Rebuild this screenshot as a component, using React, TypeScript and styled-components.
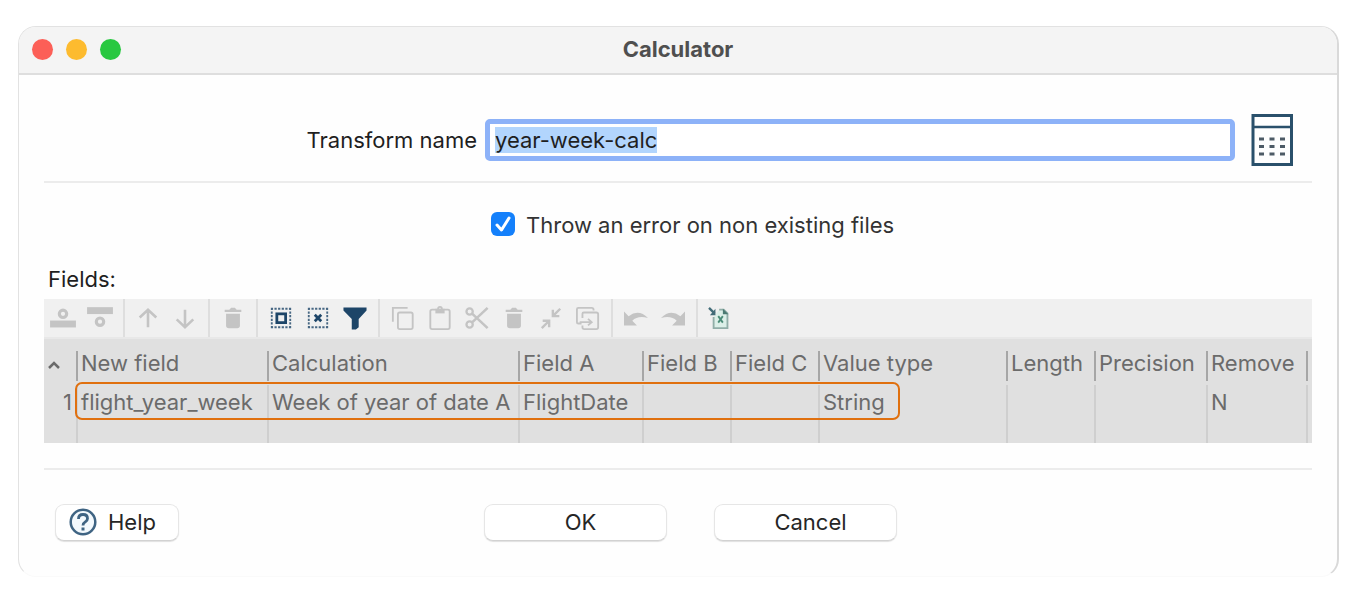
import React, { useEffect, useRef } from "react";
import styled, { createGlobalStyle } from "styled-components";

const GlobalStyle = createGlobalStyle`
  *, *::before, *::after { box-sizing: border-box; }
  body {
    margin: 0;
    background: #ffffff;
    color: #1f1f1f;
    font-family: Inter, "Liberation Sans", sans-serif;
    font-size: 22px;
    line-height: 27px;
  }
  button, input { font: inherit; color: inherit; }
`;

const Dialog = styled.main`
  margin: 26px 21px 26px 18px;
  min-width: 1100px;
  background: #fefefe;
  border: 1px solid #e2e2e2;
  border-right: 2px solid #d9d9d9;
  border-bottom-color: #fafafa;
  border-radius: 18px;
  overflow: hidden;
`;

const TitleBar = styled.header`
  display: grid;
  grid-template-columns: 1fr auto 1fr;
  align-items: center;
  height: 48px;
  padding: 0 13px 1px;
  background: #f4f4f4;
  border-bottom: 2px solid #dedede;
`;

const WindowControls = styled.div`
  display: flex;
  gap: 13px;
`;

const WindowControl = styled.button<{ $color: string }>`
  width: 21px;
  height: 21px;
  padding: 0;
  border: 0;
  border-radius: 50%;
  background: ${(p) => p.$color};
`;

const Title = styled.h1`
  margin: 0;
  font-size: 22px;
  line-height: 27px;
  font-weight: 700;
  color: #4f4f4f;
`;

const Content = styled.div`
  padding: 39px 25px 35px;
`;

const NameRow = styled.div`
  display: grid;
  grid-template-columns: 433px 1fr 42px;
  align-items: center;
  padding-right: 19px;
`;

const NameLabel = styled.label`
  text-align: right;
`;

const NameInput = styled.input`
  height: 42px;
  min-width: 0;
  margin: 0 16px 0 8px;
  padding: 0 5px;
  border: 5px solid #8db2f8;
  border-radius: 5px;
  background: #ffffff;
  outline: none;
  &::selection { background: #b2d5fd; color: #1f1f1f; }
`;

const Divider = styled.hr<{ $top: number }>`
  height: 2px;
  margin: ${(p) => p.$top}px 0 0;
  border: 0;
  background: #ececec;
`;

const CheckRow = styled.div`
  display: flex;
  align-items: flex-start;
  gap: 11px;
  margin-top: 29px;
  padding-left: 447px;
  color: #333333;
`;

const CheckBox = styled.span`
  display: grid;
  width: 24px;
  height: 24px;
  > * { grid-area: 1 / 1; }
  svg { pointer-events: none; }
`;

const CheckInput = styled.input`
  appearance: none;
  width: 24px;
  height: 24px;
  margin: 0;
  border: 1px solid #c4c4c4;
  border-radius: 6px;
  &:checked { border: 0; background: #1480fb; }
  &:not(:checked) + svg { visibility: hidden; }
`;

const FieldsTitle = styled.h2`
  margin: 27px 0 6px;
  padding-left: 4px;
  font-size: 22px;
  line-height: 27px;
  font-weight: 400;
`;

const Toolbar = styled.div`
  display: flex;
  height: 38px;
  background: #f0f0f0;
`;

const ToolGroup = styled.div`
  display: flex;
  padding: 0 5px 0 4px;
  border-right: 2px solid #dedede;
  &:first-child { padding-left: 0; }
  &:last-child { border-right: 0; }
`;

const ToolButton = styled.button<{ $active?: boolean }>`
  display: flex;
  align-items: center;
  justify-content: center;
  width: 37px;
  padding: 0;
  border: 0;
  background: transparent;
  color: ${(p) => (p.$active ? "#1d4568" : "#c4c4c4")};
`;

const TableWrap = styled.div`
  position: relative;
  height: 106px;
  padding-top: 3px;
  border-top: 2px solid #e8e8e8;
  background: #e0e0e0;
`;

const Table = styled.table`
  width: 100%;
  table-layout: fixed;
  border-collapse: separate;
  border-spacing: 0;
  color: #6b6b6b;
`;

const HeadCell = styled.th`
  height: 43px;
  padding: 9px 0 4px;
  font-weight: 400;
  text-align: left;
  white-space: nowrap;
`;

const HeadLabel = styled.span`
  display: block;
  height: 30px;
  padding: 0 0 0 3px;
  line-height: 24px;
  border-left: 2px solid #a6a6a6;
`;

const SortHead = styled.th`
  height: 43px;
  padding: 2px 0 0 3px;
  text-align: left;
  line-height: 0;
`;

const Cell = styled.td<{ $height: number }>`
  height: ${(p) => p.$height}px;
  padding: 0 0 0 3px;
  border-left: 2px solid #cfcfcf;
  white-space: nowrap;
`;

const NumberCell = styled.td`
  padding: 0 4px 0 0;
  text-align: right;
`;

const Highlight = styled.div`
  position: absolute;
  top: 43px;
  left: 31px;
  width: 825px;
  height: 38px;
  border: 2px solid #e0700f;
  border-radius: 7px;
  pointer-events: none;
`;

const Footer = styled.footer`
  display: grid;
  grid-template-columns: 429px auto 1fr;
  margin-top: 34px;
  padding-left: 11px;
`;

const Choices = styled.div`
  display: flex;
  gap: 47px;
`;

const PushButton = styled.button`
  display: flex;
  align-items: center;
  justify-content: center;
  width: 183px;
  height: 37px;
  padding: 0 0 1px 10px;
  border: 1px solid #e6e6e6;
  border-bottom-color: #d2d2d2;
  border-radius: 9px;
  background: #ffffff;
  box-shadow: 0 1px 1px rgba(0, 0, 0, 0.12);
  color: #262626;
`;

const HelpButton = styled(PushButton)`
  justify-content: flex-start;
  gap: 11px;
  width: 124px;
  padding-left: 13px;
`;

type IconProps = { children: React.ReactNode };

const Icon = ({ children }: IconProps) => (
  <svg width="24" height="24" viewBox="0 0 26 26" fill="none" stroke="currentColor" strokeWidth="2" overflow="visible" aria-hidden="true">
    {children}
  </svg>
);

const trash = (
  <g fill="currentColor" stroke="none">
    <path d="M4 4h5l2-2h4l2 2h5v2.500H4z" />
    <path d="M5.500 8.500h15V21q0 3-3 3h-9q-3 0-3-3z" />
  </g>
);

const dottedFrame = (
  <path d="M2 3h22M2 23h22M3 2v22M23 2v22" strokeDasharray="2.400 1.520" strokeWidth="2" strokeOpacity="0.8" />
);

const toolGroups: { name: string; active?: boolean; art: React.ReactNode }[][] = [
  [
    {
      name: "Insert row before",
      art: (
        <>
          <circle cx="13" cy="8.500" r="4" strokeWidth="3.400" />
          <path d="M-1 19.500h28" strokeWidth="7.500" />
        </>
      ),
    },
    {
      name: "Insert row after",
      art: (
        <>
          <path d="M-1 5h28" strokeWidth="7.500" />
          <circle cx="13" cy="17" r="4" strokeWidth="3.400" />
        </>
      ),
    },
  ],
  [
    { name: "Move up", art: <path d="M13 23V4M4 12.500L13 4l9 8.500" strokeWidth="2.800" /> },
    { name: "Move down", art: <path d="M13 4v19M4 14.500L13 23l9-8.500" strokeWidth="2.800" /> },
  ],
  [{ name: "Delete row", art: trash }],
  [
    {
      name: "Select all",
      active: true,
      art: (
        <>
          {dottedFrame}
          <rect x="8.500" y="8.500" width="9.500" height="9.500" strokeWidth="3" />
        </>
      ),
    },
    {
      name: "Clear selection",
      active: true,
      art: (
        <>
          {dottedFrame}
          <path d="M9.500 9.500l7 7M16.500 9.500l-7 7" strokeWidth="3" />
        </>
      ),
    },
    {
      name: "Filter",
      active: true,
      art: <path d="M.5 1.500h25V5L17 14v9l-3 2.500H9.500V14L.5 5z" fill="currentColor" stroke="none" />,
    },
  ],
  [
    {
      name: "Copy",
      art: (
        <>
          <path d="M2 17V2h16" />
          <rect x="7.500" y="7" width="16" height="18" rx="2" />
        </>
      ),
    },
    {
      name: "Paste",
      art: (
        <>
          <rect x="2.500" y="4" width="21" height="21" rx="2" />
          <path d="M8 3h10v5H8z" fill="currentColor" stroke="none" />
          <circle cx="13" cy="3" r="2" />
        </>
      ),
    },
    {
      name: "Cut",
      art: (
        <>
          <circle cx="5" cy="6" r="3.400" strokeWidth="2.500" />
          <circle cx="5" cy="20" r="3.400" strokeWidth="2.500" />
          <path d="M8 8.500L24.500 24M8 17.500L24.500 2" strokeWidth="2.800" />
        </>
      ),
    },
    { name: "Delete selected", art: trash },
    {
      name: "Keep selected",
      art: (
        <path d="M23 3l-7.500 7.500M15 4v7h7M3 24l7.500-7.500M4 16h7v7" strokeWidth="2.600" />
      ),
    },
    {
      name: "Copy to all rows",
      art: (
        <>
          <path d="M6 19H2.500q-1.500 0-1.500-1.500V3.500Q1 2 2.500 2H17q2 0 2 2v1" />
          <path d="M7 13V8.500Q7 7 8.500 7H22q2 0 2 2v14q0 2-2 2H9q-2 0-2-2v-2M4 17.500h12M13 14l4 3.500-4 3.500" />
        </>
      ),
    },
  ],
  [
    {
      name: "Undo",
      art: <path d="M0 6v15h14l-5-5q6-6 17-3Q16 3 5 11z" fill="currentColor" stroke="none" />,
    },
    {
      name: "Redo",
      art: <path d="M26 6v15H12l5-5q-6-6-17-3Q10 3 21 11z" fill="currentColor" stroke="none" />,
    },
  ],
  [
    {
      name: "Export to spreadsheet",
      active: true,
      art: (
        <>
          <path d="M5 12v12h15V8l-4-4h-5" fill="#dcefe8" stroke="#91aea8" />
          <path d="M15 3l6 6h-6z" fill="#4b7a72" stroke="none" />
          <path d="M10 11l5 7M15 11l-5 7" stroke="#4b8c78" />
          <path d="M0 2l6 6" stroke="#426c78" strokeWidth="2.500" />
          <path d="M7 3v7H1z" fill="#426c78" stroke="none" />
        </>
      ),
    },
  ],
];

const columns = [
  { label: "New field", value: "flight_year_week", width: 191 },
  { label: "Calculation", value: "Week of year of date A", width: 251 },
  { label: "Field A", value: "FlightDate", width: 124 },
  { label: "Field B", value: "", width: 88 },
  { label: "Field C", value: "", width: 88 },
  { label: "Value type", value: "String", width: 188 },
  { label: "Length", value: "", width: 88 },
  { label: "Precision", value: "", width: 112 },
  { label: "Remove", value: "N", width: 100 },
  { label: "", value: "", width: 0 },
];

const CalculatorIcon = () => (
  <svg width="42" height="52" viewBox="0 0 42 52" fill="none" stroke="#2a506b" aria-hidden="true">
    <rect x="2" y="1.500" width="38.500" height="49" strokeWidth="3" />
    <path d="M2 13h38" strokeWidth="2.500" />
    {[25, 32.5, 40].map((y) => (
      <path key={y} d={`M8 ${y}h5M18.500 ${y}h5M29 ${y}h5`} stroke="#4d5b66" strokeWidth="3" />
    ))}
  </svg>
);

const HelpIcon = () => (
  <svg width="28" height="28" viewBox="0 0 28 28" fill="none" stroke="#3f6483" aria-hidden="true">
    <circle cx="14" cy="14" r="12.300" strokeWidth="2.500" fill="#f3f9fd" />
    <path d="M9.500 11q0-4.500 4.500-4.500t4.500 4q0 2-2.200 3.400Q14 15.300 14 17.500" strokeWidth="2.800" />
    <path d="M14 19.500v3" strokeWidth="3" />
  </svg>
);

export default function App() {
  const nameRef = useRef<HTMLInputElement>(null);

  useEffect(() => {
    nameRef.current?.focus();
    nameRef.current?.select();
  }, []);

  return (
    <>
      <GlobalStyle />
      <Dialog>
        <TitleBar>
          <WindowControls>
            <WindowControl $color="#fc5f57" aria-label="Close" />
            <WindowControl $color="#fdbb2f" aria-label="Minimize" />
            <WindowControl $color="#28c840" aria-label="Zoom" />
          </WindowControls>
          <Title>Calculator</Title>
        </TitleBar>
        <Content>
          <NameRow>
            <NameLabel htmlFor="transform-name">Transform name</NameLabel>
            <NameInput ref={nameRef} id="transform-name" type="text" defaultValue="year-week-calc" spellCheck={false} />
            <CalculatorIcon />
          </NameRow>
          <Divider $top={15} />
          <CheckRow>
            <CheckBox>
              <CheckInput id="throw-error" type="checkbox" defaultChecked />
              <svg width="24" height="24" viewBox="0 0 24 24" fill="none" stroke="#ffffff" strokeWidth="3" strokeLinecap="round" strokeLinejoin="round" aria-hidden="true">
                <path d="M6 13l4.500 5L18 6" />
              </svg>
            </CheckBox>
            <label htmlFor="throw-error">Throw an error on non existing files</label>
          </CheckRow>
          <FieldsTitle>Fields:</FieldsTitle>
          <Toolbar role="toolbar" aria-label="Fields">
            {toolGroups.map((group) => (
              <ToolGroup key={group[0].name}>
                {group.map((tool) => (
                  <ToolButton key={tool.name} $active={tool.active} disabled={!tool.active} aria-label={tool.name}>
                    <Icon>{tool.art}</Icon>
                  </ToolButton>
                ))}
              </ToolGroup>
            ))}
          </Toolbar>
          <TableWrap>
            <Table>
              <colgroup>
                <col width={32} />
                {columns.map((c) => (
                  <col key={c.label} width={c.width || undefined} />
                ))}
              </colgroup>
              <thead>
                <tr>
                  <SortHead aria-label="Row number">
                    <svg width="14" height="10" viewBox="0 0 14 10" fill="none" stroke="#6b6b6b" strokeWidth="2.500" aria-hidden="true">
                      <path d="M2 8l5-5 5 5" />
                    </svg>
                  </SortHead>
                  {columns.map((c) => (
                    <HeadCell key={c.label}>
                      <HeadLabel>{c.label}</HeadLabel>
                    </HeadCell>
                  ))}
                </tr>
              </thead>
              <tbody>
                <tr>
                  <NumberCell>1</NumberCell>
                  {columns.map((c) => (
                    <Cell key={c.label} $height={34}>{c.value}</Cell>
                  ))}
                </tr>
                <tr>
                  <NumberCell />
                  {columns.map((c) => (
                    <Cell key={c.label} $height={24} />
                  ))}
                </tr>
              </tbody>
            </Table>
            <Highlight />
          </TableWrap>
          <Divider $top={25} />
          <Footer>
            <div>
              <HelpButton>
                <HelpIcon />
                Help
              </HelpButton>
            </div>
            <Choices>
              <PushButton>OK</PushButton>
              <PushButton>Cancel</PushButton>
            </Choices>
          </Footer>
        </Content>
      </Dialog>
    </>
  );
}
